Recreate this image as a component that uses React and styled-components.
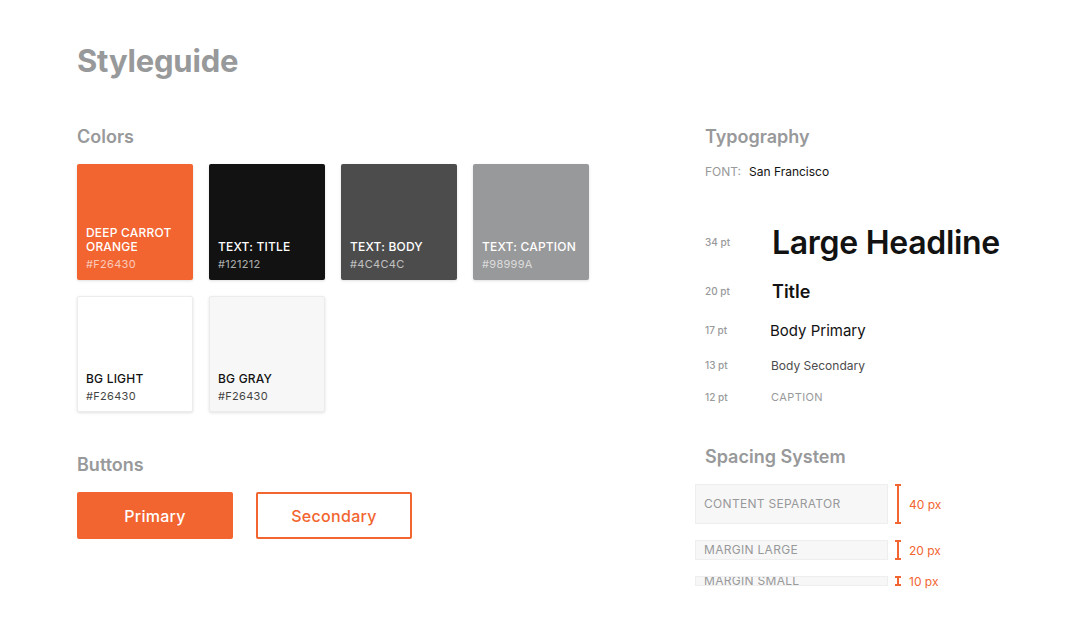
import React from "react";
import styled, { createGlobalStyle } from "styled-components";

const Global = createGlobalStyle`
  body {
    margin: 0;
    background: #fff;
    font-family: Inter, "Noto Sans", sans-serif;
  }
`;

const Page = styled.div`
  width: 1080px;
  height: 635px;
  box-sizing: border-box;
  padding: 42px 0 0 77px;
  overflow: hidden;
`;

const PageTitle = styled.h1`
  margin: 0 0 47px;
  font-size: 31px;
  font-weight: 700;
  color: #98999a;
  letter-spacing: -0.2px;
`;

const Columns = styled.div`
  display: flex;
`;

const Left = styled.div`
  width: 628px;
`;

const Right = styled.div`
  width: 330px;
`;

const Heading = styled.h2`
  margin: 0 0 16px;
  font-size: 18px;
  font-weight: 600;
  color: #98999a;
  line-height: 22px;
`;

const SwatchGrid = styled.div`
  display: grid;
  grid-template-columns: repeat(4, 116px);
  gap: 16px;
  margin-bottom: 42px;
`;

const Swatch = styled.div`
  height: 116px;
  box-sizing: border-box;
  background: ${(p) => p.$bg};
  border-radius: 2px;
  border: 1px solid ${(p) => (p.$light ? "#ececec" : "transparent")};
  box-shadow: 0 1px 3px rgba(0, 0, 0, 0.12);
  padding: 0 8px 8px;
  display: flex;
  flex-direction: column;
  justify-content: flex-end;
  color: ${(p) => (p.$light ? "#121212" : "#fff")};
`;

const SwatchName = styled.div`
  font-size: 12px;
  font-weight: 500;
  line-height: 14px;
  letter-spacing: 0.2px;
  margin-bottom: 3px;
`;

const SwatchHex = styled.div`
  font-size: 11px;
  line-height: 14px;
  opacity: ${(p) => (p.$light ? 0.8 : 0.65)};
  letter-spacing: 0.3px;
`;

const ButtonRow = styled.div`
  display: flex;
  gap: 23px;
`;

const Button = styled.button`
  width: 156px;
  height: 47px;
  border-radius: 2px;
  font-family: inherit;
  font-size: 16px;
  font-weight: 500;
  letter-spacing: 0.3px;
  border: 2px solid #f26430;
  background: ${(p) => (p.$primary ? "#f26430" : "#fff")};
  color: ${(p) => (p.$primary ? "#fff" : "#f26430")};
`;

const FontLine = styled.div`
  font-size: 12px;
  color: #121212;
  margin-bottom: 39px;
  span {
    color: #98999a;
    margin-right: 8px;
  }
`;

const TypeRow = styled.div`
  display: flex;
  align-items: center;
  height: ${(p) => p.$h}px;
`;

const Pt = styled.div`
  width: ${(p) => p.$w || 67}px;
  font-size: 10px;
  font-weight: 500;
  color: #98999a;
`;

const Sample = styled.div`
  font-size: ${(p) => p.$size}px;
  font-weight: ${(p) => p.$weight};
  color: ${(p) => p.$color || "#121212"};
  letter-spacing: ${(p) => p.$ls || 0}px;
`;

const Gap = styled.div`
  height: ${(p) => p.$h}px;
`;

const SpacingList = styled.div`
  margin-left: -10px;
  display: flex;
  flex-direction: column;
  gap: 16px;
`;

const SpaceRow = styled.div`
  display: flex;
  align-items: center;
  height: ${(p) => p.$h}px;
`;

const SpaceBox = styled.div`
  width: 193px;
  height: 100%;
  box-sizing: border-box;
  background: #f7f7f7;
  border: 1px solid #eeeeee;
  padding-left: 8px;
  font-size: 12px;
  letter-spacing: 0.3px;
  color: #98999a;
  display: flex;
  align-items: center;
  overflow: hidden;
  line-height: 12px;
`;

const Bracket = styled.div`
  width: 2px;
  height: 100%;
  background: #f26430;
  margin: 0 10px 0 9px;
  position: relative;
  &::before,
  &::after {
    content: "";
    position: absolute;
    left: -2px;
    width: 6px;
    height: 2px;
    background: #f26430;
  }
  &::before { top: 0; }
  &::after { bottom: 0; }
`;

const SpaceLabel = styled.div`
  font-size: 12px;
  color: #f26430;
`;

const colors = [
  { name: "DEEP CARROT ORANGE", hex: "#F26430", bg: "#f26430" },
  { name: "TEXT: TITLE", hex: "#121212", bg: "#121212" },
  { name: "TEXT: BODY", hex: "#4C4C4C", bg: "#4c4c4c" },
  { name: "TEXT: CAPTION", hex: "#98999A", bg: "#98999a" },
  { name: "BG LIGHT", hex: "#F26430", bg: "#ffffff", light: true },
  { name: "BG GRAY", hex: "#F26430", bg: "#f7f7f7", light: true },
];

const spacing = [
  { name: "CONTENT SEPARATOR", h: 40, label: "40 px" },
  { name: "MARGIN LARGE", h: 20, label: "20 px" },
  { name: "MARGIN SMALL", h: 10, label: "10 px" },
];

export default function App() {
  return (
    <>
      <Global />
      <Page>
        <PageTitle>Styleguide</PageTitle>
        <Columns>
          <Left>
            <Heading>Colors</Heading>
            <SwatchGrid>
              {colors.map((c) => (
                <Swatch key={c.name} $bg={c.bg} $light={c.light}>
                  <SwatchName>
                    {c.name === "DEEP CARROT ORANGE" ? (
                      <>DEEP CARROT<br />ORANGE</>
                    ) : (
                      c.name
                    )}
                  </SwatchName>
                  <SwatchHex $light={c.light}>{c.hex}</SwatchHex>
                </Swatch>
              ))}
            </SwatchGrid>
            <Heading>Buttons</Heading>
            <ButtonRow>
              <Button $primary>Primary</Button>
              <Button>Secondary</Button>
            </ButtonRow>
          </Left>
          <Right>
            <Heading>Typography</Heading>
            <FontLine>
              <span>FONT:</span>San Francisco
            </FontLine>
            <TypeRow $h={48}>
              <Pt>34 pt</Pt>
              <Sample $size={32} $weight={600} $ls={-0.3}>Large Headline</Sample>
            </TypeRow>
            <TypeRow $h={50}>
              <Pt>20 pt</Pt>
              <Sample $size={18} $weight={600}>Title</Sample>
            </TypeRow>
            <TypeRow $h={28}>
              <Pt $w={65}>17 pt</Pt>
              <Sample $size={15} $weight={400}>Body Primary</Sample>
            </TypeRow>
            <TypeRow $h={42}>
              <Pt $w={66}>13 pt</Pt>
              <Sample $size={12} $weight={400} $color="#4c4c4c">Body Secondary</Sample>
            </TypeRow>
            <TypeRow $h={22}>
              <Pt $w={66}>12 pt</Pt>
              <Sample $size={11} $weight={400} $color="#98999a" $ls={0.4}>CAPTION</Sample>
            </TypeRow>
            <Gap $h={38} />
            <Heading>Spacing System</Heading>
            <SpacingList>
              {spacing.map((s) => (
                <SpaceRow key={s.name} $h={s.h}>
                  <SpaceBox>{s.name}</SpaceBox>
                  <Bracket />
                  <SpaceLabel>{s.label}</SpaceLabel>
                </SpaceRow>
              ))}
            </SpacingList>
          </Right>
        </Columns>
      </Page>
    </>
  );
}
